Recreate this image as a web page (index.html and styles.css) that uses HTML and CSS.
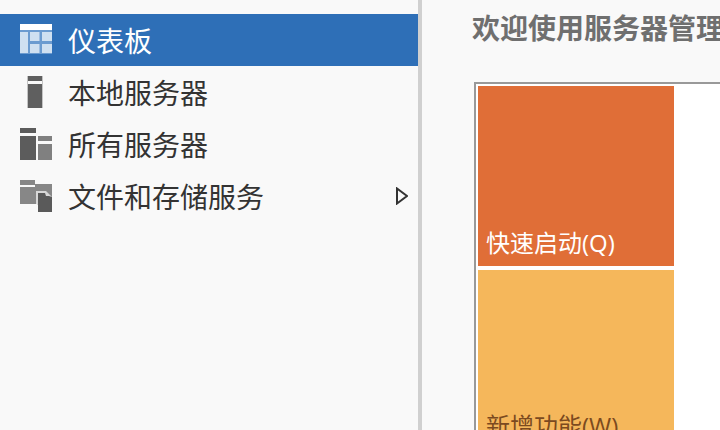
FILE: index.html
```
<!DOCTYPE html>
<html lang="zh-CN">
<head>
<meta charset="utf-8">
<title>服务器管理器</title>
<link rel="stylesheet" href="styles.css">
</head>
<body>
<div class="app">
  <nav class="sidebar">
    <div class="row selected">
      <svg class="icon" width="32" height="32" viewBox="0 0 32 32"><rect y="0" width="32" height="6" fill="#fff"/><rect y="6" width="32" height="24" fill="#6b9bd0"/><g fill="#cfe0f1"><rect y="8" width="8" height="21"/><rect x="10" y="8" width="9.500" height="9"/><rect x="22" y="8" width="10" height="9"/><rect x="10" y="20" width="9.500" height="9"/><rect x="22" y="20" width="10" height="9"/></g></svg>
      <span class="label">仪表板</span>
    </div>
    <div class="row">
      <svg class="icon" width="32" height="32" viewBox="0 0 32 32"><g fill="#5f5f5f"><rect x="8" y="0" width="14" height="5"/><rect x="8" y="8" width="14" height="24"/></g><g fill="#c4c4c4"><rect x="7" y="0" width="1" height="32"/><rect x="22" y="0" width="1" height="32"/></g></svg>
      <span class="label">本地服务器</span>
    </div>
    <div class="row">
      <svg class="icon" width="32" height="32" viewBox="0 0 32 32"><g fill="#5c5c5c"><rect y="0" width="16" height="5"/><rect y="8" width="16" height="24"/></g><g fill="#808080"><rect x="18" y="8" width="14" height="5"/><rect x="18" y="16" width="14" height="16"/></g></svg>
      <span class="label">所有服务器</span>
    </div>
    <div class="row">
      <svg class="icon" width="32" height="32" viewBox="0 0 32 32"><path fill="#878787" d="M0 0h15v5H0zM0 7h15V4h17v21H17v-1H0z"/><path fill="#f9f9f9" d="M16 11h10l6 6v9H16z" opacity=".7"/><path fill="#5a5a5a" d="M18 13h7l1 3 3 0 3 1v15H18z"/></svg>
      <span class="label">文件和存储服务</span>
      <svg class="arrow" width="12" height="18" viewBox="0 0 12 18"><path d="M1 1.500V16.500L11 9Z" fill="none" stroke="#333" stroke-width="2"/></svg>
    </div>
  </nav>
  <main class="main">
    <h1 class="title">欢迎使用服务器管理器</h1>
    <section class="panel">
      <div class="tile quick"><span>快速启动(Q)</span></div>
      <div class="tile fresh"><span>新增功能(W)</span></div>
    </section>
  </main>
</div>
</body>
</html>
```

FILE: styles.css
```
* {
  box-sizing: border-box;
}

html,
body {
  margin: 0;
  height: 430px;
  overflow: hidden;
}

body {
  background: #f9f9f9;
  font-family: "Noto Sans CJK SC", "Noto Sans", sans-serif;
}

.app {
  display: flex;
  height: 430px;
  overflow: hidden;
}

.sidebar {
  flex: none;
  width: 422px;
  padding-top: 14px;
  border-right: 4px solid #d0d0d0;
}

.row {
  display: flex;
  align-items: center;
  height: 52px;
  padding-left: 20px;
  color: #333;
}

.row.selected {
  background: #2e6fb7;
  color: #fff;
}

.icon {
  flex: none;
}

.label {
  margin-left: 16px;
  font-size: 28px;
  line-height: 52px;
  white-space: nowrap;
}

.arrow {
  flex: none;
  margin-left: auto;
  margin-right: 10px;
}

.main {
  flex: 1;
  min-width: 0;
  padding-left: 50px;
}

.title {
  margin: 0;
  height: 82px;
  padding-top: 6px;
  font-size: 28px;
  line-height: 42px;
  font-weight: 700;
  color: #6f6f6f;
  white-space: nowrap;
}

.panel {
  margin-left: 2px;
  width: 400px;
  height: 500px;
  padding: 2px;
  background: #fff;
  border: 2px solid #999;
}

.tile {
  display: flex;
  align-items: flex-end;
  width: 196px;
  padding: 0 8px 6px;
  font-family: "Open Sans", "Noto Sans CJK SC", sans-serif;
  font-size: 24px;
  line-height: 34px;
}

.quick {
  height: 180px;
  background: #e06e37;
  color: #fff;
}

.fresh {
  height: 180px;
  margin-top: 4px;
  padding-bottom: 7px;
  background: #f5b75b;
  color: #7b4a20;
}
```
